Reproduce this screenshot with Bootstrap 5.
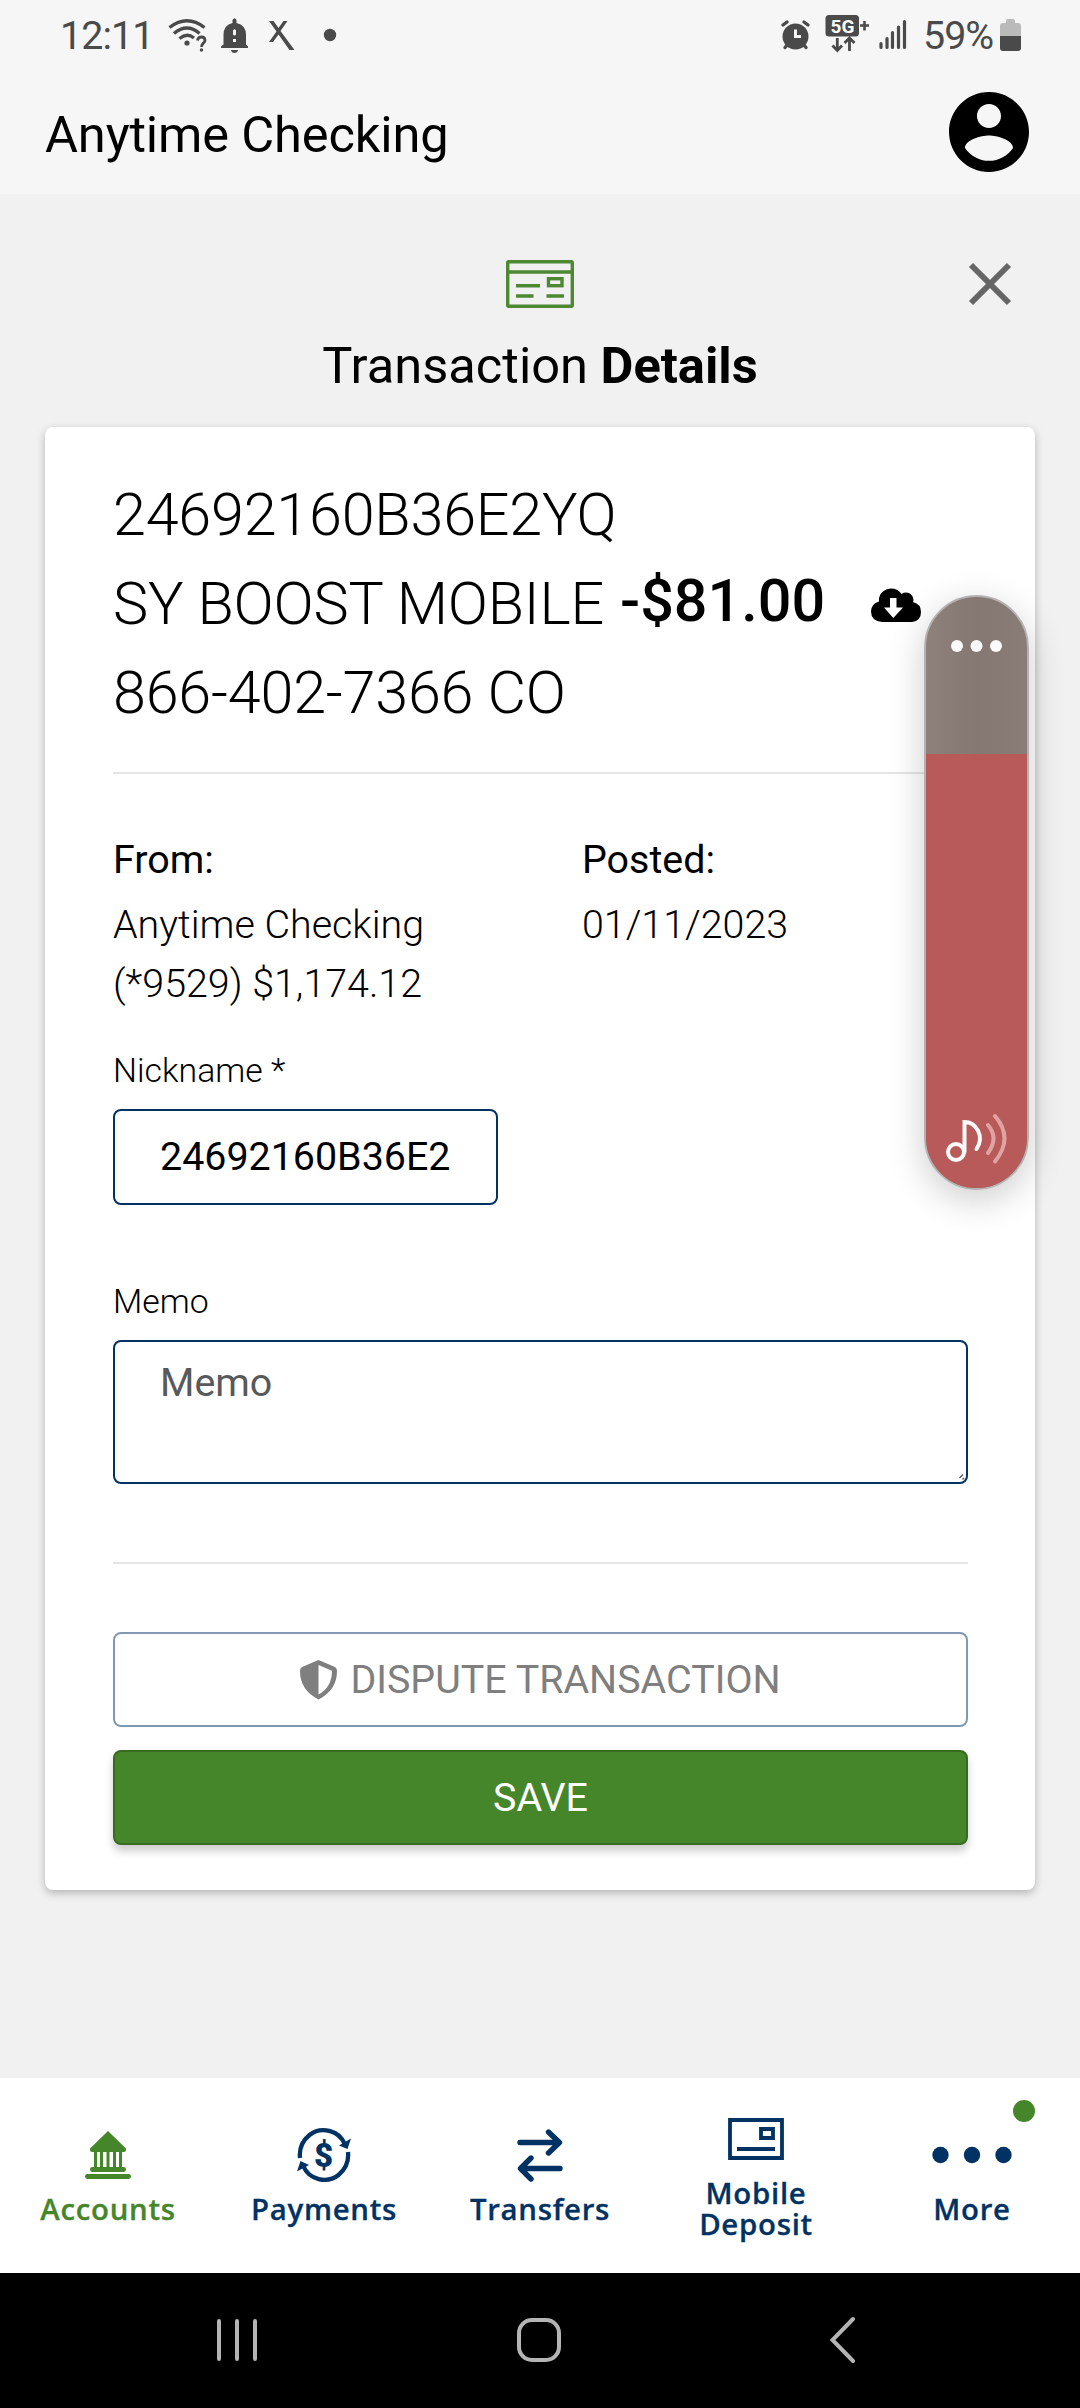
<!DOCTYPE html>
<html lang="en">
<head>
<meta charset="utf-8">
<meta name="viewport" content="width=device-width, initial-scale=1">
<title>Transaction Details</title>
<link href="https://cdn.jsdelivr.net/npm/bootstrap@5.3.0/dist/css/bootstrap.min.css" rel="stylesheet">
<style>
  body { width: 1080px; height: 2408px; overflow: hidden; background: #f1f1f1; color: #000; font-family: Roboto, sans-serif; font-size: 39.4px; line-height: 59px; }
  svg { display: block; flex: none; }
  .status-bar { height: 70px; background: #f6f6f6; color: #4a4a4a; padding: 0 59px 0 60px; font-size: 39.4px; }
  .status-time { width: 104px; letter-spacing: -.9px; white-space: nowrap; }
  .status-pct { width: 77px; margin-left: 15px; letter-spacing: -1px; white-space: nowrap; }
  .app-bar { height: 124px; background: #f6f6f6; padding: 0 43px 0 45px; font-size: 50.6px; }
  .app-title { padding-top: 5px; letter-spacing: -.15px; }
  .page-head { height: 233px; padding-top: 66px; }
  .page-head h1 { font-size: 50.6px; line-height: 60px; margin: 28px 0 0; font-weight: 400; }
  .close-x { top: 65px; right: 65px; }
  .detail-card { width: 990px; height: 1463px; margin: 0 45px; padding: 43px 67px 0 68px; border: 0; border-radius: 8px; box-shadow: 0 3px 8px rgba(0,0,0,.26); }
  .descr { width: 504px; font-size: 59.3px; line-height: 89px; font-weight: 300; letter-spacing: -.22px; white-space: nowrap; }
  .amount { width: 250px; font-size: 59.3px; line-height: 89px; font-weight: 500; margin: -7px 0 0 3px; white-space: nowrap; }
  .cloud { margin-top: 5px; }
  .rule { height: 2px; background: #e5e5e5; }
  .rule-top { margin-top: 35px; }
  .info { margin-top: 56px; height: 183px; }
  .info > div { flex: 0 0 469px; }
  .info dt { font-weight: 400; }
  .info dd { margin: 6px 0 0; font-weight: 300; }
  .form-label { display: block; margin: 0; font-size: 33.8px; line-height: 50px; font-weight: 300; }
  .nick-label { padding-top: 33px; }
  .form-control, .form-control:focus { border: 2px solid #003263; border-radius: 8px; padding: 0 45px; font-size: 39.4px; line-height: 59px; color: #000; background: #fff; font-family: inherit; box-shadow: none; }
  .form-control::placeholder { color: #58595b; opacity: 1; }
  .nick { width: 385px; height: 96px; margin-top: 13px; padding-right: 46px; padding-bottom: 1px; }
  .memo-label { margin-top: 72px; }
  .memo-box.form-control { height: 144px; min-height: 0; margin-top: 13px; padding-top: 11px; resize: none; overflow: hidden; }
  .grip { right: 2px; bottom: 3px; }
  .rule-low { margin-top: 78px; }
  .act { height: 95px; border-radius: 8px; font-size: 39.4px; line-height: 59px; padding: 0; border-width: 2px; }
  .act-dispute { margin-top: 68px; border-color: #8098b1; color: #7f7f7f; }
  .act-dispute svg { margin-right: 13px; }
  .act-save { margin-top: 23px; background: #46862a; border-color: #386b22; color: #fff; box-shadow: 0 6px 8px rgba(0,0,0,.2); }
  .tabs { height: 195px; margin-top: 188px; padding-bottom: 2px; background: #fff; color: #003263; font: 600 29.4px/31px "Open Sans", sans-serif; letter-spacing: .7px; -webkit-text-stroke: .3px; }
  .tab-item { width: 216px; }
  .tab-item.on { color: #46862a; }
  .tab-icon { height: 60px; margin-bottom: 9px; }
  .dot-new { width: 22px; height: 22px; right: 45px; top: 22px; background: #46862a; }
  .sys { height: 135px; background: #000; }
  .volume { left: 924px; top: 595px; width: 105px; height: 595px; border: 2px solid #b5b2b1; border-radius: 53px; background: linear-gradient(90deg, #8e807b, #857873 50%, #8a7d78); box-shadow: 0 10px 36px rgba(0,0,0,.2); overflow: hidden; }
  .volume-top { height: 157px; padding-top: 42px; }
  .volume-level { height: 434px; padding: 356px 0 0 18px; background: #b85a59; }
</style>
<script src="https://cdn.jsdelivr.net/npm/bootstrap@5.3.0/dist/js/bootstrap.bundle.min.js"></script>
</head>
<body class="position-relative m-0">

<div class="status-bar d-flex align-items-center">
  <span class="status-time">12:11</span>
  <svg class="ms-1" width="170" height="70" viewBox="168 0 170 70" fill="none" stroke="#4a4a4a" stroke-width="3.4">
    <path d="M169.500 27.500Q187 14 204.500 27.500M174 33.500Q187 22.500 199.500 33.500M179.500 38.500Q187 32.500 194 38"/>
    <circle cx="187" cy="43" r="2.600" fill="#4a4a4a" stroke="none"/>
    <path d="M197.500 40.500Q198 37 201.500 37Q205 37 205 40.500C205 43 201.500 43 201.500 47" stroke-width="2.800"/>
    <circle cx="201.500" cy="50" r="1.700" fill="#4a4a4a" stroke="none"/>
    <path fill="#4a4a4a" stroke="none" fill-rule="evenodd" d="M232.500 23V20Q234.500 16.500 236.500 20V23Q246 25 246 35V44.500L248 46.500V48H221V46.500L223.500 44.500V35Q223.500 25 232.500 23ZM233 30.500V34.500Q234.500 36.500 236 34.500V30.500Q234.500 28 233 30.500ZM233 39V42H236V39ZM231 50H238Q237.500 53 234.500 53Q231.500 53 231 50Z"/>
    <path fill="#4a4a4a" stroke="none" d="M269 21H273.500L278.500 28L283.500 21H287.500L280.500 31L294.500 50H289.500L278.500 34.500L273 42H269L276.500 31.500Z"/>
    <circle cx="330" cy="35" r="6.200" fill="#4a4a4a" stroke="none"/>
  </svg>
  <svg class="ms-auto" width="128" height="70" viewBox="781 0 128 70" fill="#4a4a4a">
    <circle cx="796.500" cy="36.500" r="13"/>
    <path d="M784 25L788 22M809 25L805 22M786 47.500L789 44M807 47.500L804 44" stroke="#4a4a4a" stroke-width="3.400" stroke-linecap="round"/>
    <path d="M796.500 29.500V36.500H802" fill="none" stroke="#f6f6f6" stroke-width="3"/>
    <rect x="826.500" y="15" width="33.500" height="21.500" rx="3.500"/>
    <text x="843.500" y="32.500" text-anchor="middle" font-family="Roboto, sans-serif" font-weight="700" font-size="19" fill="#fff">5G</text>
    <path d="M861 25.500H870M865.500 21V30.500" stroke="#4a4a4a" stroke-width="2.600"/>
    <path d="M838.300 38V50M833.500 45.500L838.300 50.500L843 45.500M850.500 51V39M845.500 43L850.500 38L855.500 43" fill="none" stroke="#4a4a4a" stroke-width="2.800"/>
    <path d="M882 43.500V47.500M888 38.500V47.500M893.500 32.500V47.500M899.500 27V47.500M905.500 21.500V47.500" stroke="#4a4a4a" stroke-width="3.200" stroke-linecap="round"/>
  </svg>
  <span class="status-pct">59%</span>
  <svg width="21" height="70" viewBox="1000 0 21 70">
    <path fill="#bababa" d="M1006 21Q1006 19 1008 19H1013Q1015 19 1015 21V23H1018Q1021 23 1021 26V36H1000V26Q1000 23 1003 23H1006Z"/>
    <path fill="#4a4a4a" d="M1000 36H1021V48Q1021 51 1018 51H1003Q1000 51 1000 48Z"/>
  </svg>
</div>

<header class="app-bar d-flex align-items-center justify-content-between">
  <div class="app-title">Anytime Checking</div>
  <svg width="96" height="96" viewBox="0 0 24 24"><path d="M12 2C6.480 2 2 6.480 2 12s4.480 10 10 10 10-4.480 10-10S17.520 2 12 2zm0 3c1.660 0 3 1.340 3 3s-1.340 3-3 3-3-1.340-3-3 1.340-3 3-3zm0 14.200c-2.500 0-4.710-1.280-6-3.220.030-1.990 4-3.080 6-3.080 1.990 0 5.970 1.090 6 3.080-1.290 1.940-3.500 3.220-6 3.220z"/></svg>
</header>

<section class="page-head position-relative text-center">
  <svg class="mx-auto" width="68" height="48" viewBox="0 0 68 48" fill="none" stroke="#4d8833" stroke-width="3.400">
    <rect x="1.700" y="1.700" width="64.600" height="44.600" rx="1"/><path d="M2 12H66M10 25.700H34M10 36H27.500M40.500 36H58"/><rect x="42.500" y="18.700" width="13.500" height="7"/>
  </svg>
  <h1>Transaction <b>Details</b></h1>
  <svg class="close-x position-absolute" width="50" height="50" viewBox="0 0 50 50"><path d="M6 6L44 44M44 6L6 44" stroke="#666" stroke-width="5.800"/></svg>
</section>

<main class="card detail-card">
  <div class="d-flex align-items-center">
    <div class="descr">24692160B36E2YQ<br>SY BOOST MOBILE<br>866-402-7366 CO</div>
    <div class="amount">-$81.00</div>
    <svg class="cloud" width="52" height="36" viewBox="870 588 52 36"><path d="M882 622Q871 621 871 611.500Q871 604 879 601.500Q878.500 595 883 591.500C889 586.500 898 588 901.500 594C907 590.500 913.500 594 913.500 600.500L913 602Q921 604 921 612Q921 621 912 622Z"/><path fill="#fff" d="M890 598H896.500V607.500H903L893.300 618L884 607.500H890Z"/></svg>
  </div>
  <div class="rule rule-top"></div>

  <dl class="info d-flex mb-0">
    <div><dt>From:</dt><dd>Anytime Checking<br>(*9529) $1,174.12</dd></div>
    <div><dt>Posted:</dt><dd>01/11/2023</dd></div>
  </dl>

  <label class="form-label nick-label" for="nick">Nickname *</label>
  <input class="form-control nick" id="nick" value="24692160B36E2YQ">
  <label class="form-label memo-label" for="memo">Memo</label>
  <div class="position-relative">
    <textarea class="form-control memo-box" id="memo" placeholder="Memo"></textarea>
    <svg class="grip position-absolute" width="8" height="8" viewBox="0 0 8 8"><path d="M1.500 5L5 1.500M4.500 6.500L6 5" stroke="#555" stroke-width="1.400"/></svg>
  </div>
  <div class="rule rule-low"></div>

  <button class="btn act act-dispute d-flex align-items-center justify-content-center">
    <svg width="37" height="40" viewBox="0 0 37 40"><path fill="#7f7f7f" fill-rule="evenodd" d="M18.500 0L35 7Q37 8 37 11Q37 30 18.500 39.500Q0 30 0 11Q0 8 2 7ZM18.500 5V34.500Q32 27 32 10.700Z"/></svg>DISPUTE TRANSACTION
  </button>
  <button class="btn act act-save">SAVE</button>
</main>

<nav class="tabs d-flex text-center">
  <div class="tab-item on d-flex flex-column align-items-center justify-content-center">
    <div class="tab-icon d-flex align-items-center"><svg width="46" height="50" viewBox="0 0 46 50" fill="#46862a"><path d="M23 1L41 18.500Q41.500 22 38.500 22H7.500Q4.500 22 5 18.500Z"/><path d="M9 21H12V38H9ZM15 21H18V38H15ZM21.500 21H24.500V38H21.500ZM28 21H31V38H28ZM34 21H37V38H34Z"/><rect x="5" y="37" width="36" height="5" rx="2.400"/><rect x="0" y="44" width="46" height="5" rx="2.400"/></svg></div>
    <span>Accounts</span>
  </div>
  <div class="tab-item d-flex flex-column align-items-center justify-content-center">
    <div class="tab-icon d-flex align-items-center"><svg width="56" height="56" viewBox="0 0 56 56" fill="none" stroke="#003263" stroke-width="4.300"><path d="M4 31Q2.500 17 13.500 8C25-1 43 3 49 17.500M52 25Q53.500 39 42.500 48C31 57 13 53 7 38.500"/><path fill="#003263" stroke="none" d="M43 18.500L55 11.500L51.500 22ZM13 38L1 44.500L4.500 34Z"/><text x="28" y="40" text-anchor="middle" font-family="Roboto, sans-serif" font-weight="900" font-size="33" fill="#003263" stroke="none">$</text></svg></div>
    <span>Payments</span>
  </div>
  <div class="tab-item d-flex flex-column align-items-center justify-content-center">
    <div class="tab-icon d-flex align-items-center"><svg width="46" height="54" viewBox="0 0 46 54" fill="none" stroke="#003263" stroke-width="5.400" stroke-linecap="round" stroke-linejoin="round"><path d="M3 14.500H42M31.500 4L42.500 14.500L31.500 25M43 40.500H4M14 30L3.500 40.500L14 51"/></svg></div>
    <span>Transfers</span>
  </div>
  <div class="tab-item d-flex flex-column align-items-center justify-content-center">
    <div class="tab-icon d-flex align-items-center"><svg width="56" height="42" viewBox="0 0 56 42" fill="none" stroke="#003263" stroke-width="3.800"><path d="M2 2H54V40H2ZM33 11H45V20H33ZM9 31H47"/></svg></div>
    <span>Mobile<br>Deposit</span>
  </div>
  <div class="tab-item position-relative d-flex flex-column align-items-center justify-content-center">
    <div class="tab-icon d-flex align-items-center"><svg width="80" height="18" viewBox="0 0 80 18" fill="#003263"><circle cx="8.500" cy="9" r="8.200"/><circle cx="40" cy="9" r="8.200"/><circle cx="71.500" cy="9" r="8.200"/></svg></div>
    <span>More</span>
    <i class="dot-new position-absolute rounded-circle"></i>
  </div>
</nav>

<div class="sys"><svg width="1080" height="135" viewBox="0 2273 1080 135" fill="none" stroke="#b4b4b4" stroke-width="4" stroke-linecap="round"><path d="M219 2321V2359M237 2321V2359M255 2321V2359M853 2319L832.500 2340L853 2361"/><rect x="519" y="2320" width="40" height="40" rx="13"/></svg></div>

<div class="volume position-absolute">
  <div class="volume-top"><svg width="101" height="14" viewBox="0 0 101 14" fill="#fafafa"><circle cx="31" cy="7" r="6"/><circle cx="50.500" cy="7" r="6"/><circle cx="70" cy="7" r="6"/></svg></div>
  <div class="volume-level"><svg width="64" height="56" viewBox="944 1110 64 56" fill="none" stroke="#fafafa" stroke-width="4" stroke-linecap="round"><ellipse cx="956" cy="1152" rx="8" ry="8"/><path d="M964.500 1152V1122C976 1122 985 1136 976.500 1149"/><path d="M988 1125Q999 1138 988 1153M995 1116Q1014 1138 995 1161.500" stroke="#e0a3a3"/></svg></div>
</div>
</body>
</html>
